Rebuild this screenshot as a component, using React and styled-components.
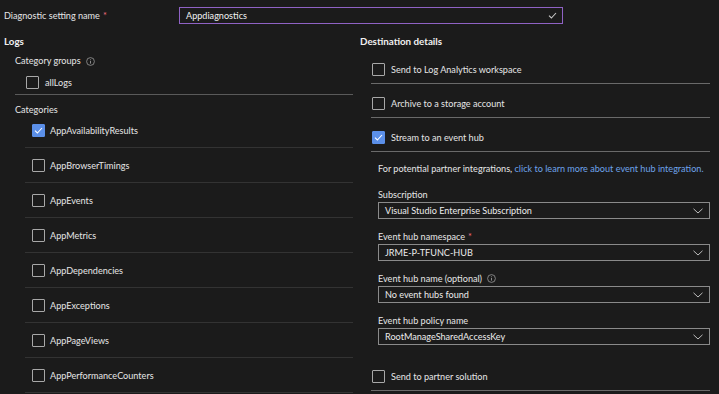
import styled, { createGlobalStyle } from 'styled-components';

const GlobalStyle = createGlobalStyle`
  html, body {
    margin: 0;
    padding: 0;
    background: #1b1b1b;
  }
  body {
    font-family: "Lato", "Open Sans", "Liberation Sans", sans-serif;
    font-size: 9.1px;
    color: #e6e6e6;
  }
`;

const Page = styled.div`
  width: 719px;
  height: 394px;
  overflow: hidden;
  background: #1b1b1b;
`;

const TopRow = styled.div`
  display: flex;
  align-items: center;
  height: 30px;
  padding-left: 4px;
`;

const TopLabel = styled.div`
  width: 175px;
`;

const Required = styled.span`
  color: #f1707b;
  margin-left: 3px;
`;

const NameInput = styled.div`
  box-sizing: border-box;
  width: 384px;
  height: 17px;
  border: 1px solid #8f62c4;
  display: flex;
  align-items: center;
  justify-content: space-between;
  padding: 0 5px 0 6px;
  color: #f2f2f2;
`;

const Columns = styled.div`
  display: grid;
  grid-template-columns: 360px 350px;
`;

const Column = styled.div`
  display: flex;
  flex-direction: column;
  padding-left: ${p => p.$pad || 0}px;
`;

const SectionTitle = styled.div`
  font-weight: 700;
  font-size: 9.8px;
  height: 22px;
  line-height: 22px;
  color: #f0f0f0;
`;

const SubTitle = styled.div`
  display: flex;
  align-items: center;
  gap: 5px;
  margin-left: 11px;
  height: 18px;
  line-height: 18px;
`;

const CategoriesTitle = styled.div`
  margin-left: 11px;
  padding-top: 10px;
  height: 8px;
  line-height: 10px;
`;

const PlainRow = styled.div`
  display: flex;
  align-items: center;
  gap: 6px;
  margin-left: 22px;
  height: 24px;
`;

const Divider = styled.div`
  margin: 0 7px 0 11px;
  height: 1px;
  background: #5a5a5a;
`;

const CatRow = styled.div`
  display: flex;
  align-items: center;
  gap: 5px;
  height: 34px;
  margin: 0 7px 0 21px;
  padding-left: 7px;
  border-bottom: 1px solid #333333;
`;

const DestRow = styled.div`
  display: flex;
  align-items: center;
  gap: 6px;
  height: 28px;
  margin: ${p => p.$top ?? 5}px 0 0 11px;
  padding-left: 1px;
  border-bottom: 1px solid #6a6a6a;
`;

const Box = styled.span`
  box-sizing: border-box;
  width: 13px;
  height: 13px;
  flex: none;
  border: 1px solid ${p => (p.$checked ? '#5b8fe8' : '#a8a8a8')};
  background: ${p => (p.$checked ? '#5b8fe8' : 'transparent')};
  border-radius: 1px;
  display: flex;
  align-items: center;
  justify-content: center;
`;

const HubSection = styled.div`
  display: flex;
  flex-direction: column;
  padding-left: 18px;
  margin-top: 9px;
`;

const Note = styled.div`
  height: 16px;
  line-height: 16px;
  white-space: nowrap;
`;

const Link = styled.span`
  color: #6ea3ea;
`;

const Field = styled.div`
  display: flex;
  flex-direction: column;
  margin-top: 9px;
`;

const FieldLabel = styled.div`
  display: flex;
  align-items: center;
  gap: 5px;
  height: 16px;
`;

const Select = styled.div`
  box-sizing: border-box;
  height: 17px;
  border: 1px solid #8a8a8a;
  display: flex;
  align-items: center;
  justify-content: space-between;
  padding: 0 6px;
  color: #ececec;
`;

const Check = ({ color = '#ffffff' }) => (
  <svg width="9" height="7" viewBox="0 0 9 7" fill="none">
    <path d="M1 3.6 L3.4 6 L8 1" stroke={color} strokeWidth="1.1" />
  </svg>
);

const Chevron = () => (
  <svg width="10" height="6" viewBox="0 0 10 6" fill="none">
    <path d="M0.5 0.8 L5 5 L9.5 0.8" stroke="#bdbdbd" strokeWidth="1" />
  </svg>
);

const Info = () => (
  <svg width="9" height="9" viewBox="0 0 9 9" fill="none">
    <circle cx="4.5" cy="4.5" r="3.9" stroke="#9a9a9a" strokeWidth="0.8" />
    <path d="M4.5 4 V6.6" stroke="#9a9a9a" strokeWidth="0.9" />
    <circle cx="4.5" cy="2.7" r="0.5" fill="#9a9a9a" />
  </svg>
);

const CheckBox = ({ checked }) => (
  <Box $checked={checked}>{checked && <Check />}</Box>
);

const categories = [
  { name: 'AppAvailabilityResults', checked: true },
  { name: 'AppBrowserTimings' },
  { name: 'AppEvents' },
  { name: 'AppMetrics' },
  { name: 'AppDependencies' },
  { name: 'AppExceptions' },
  { name: 'AppPageViews' },
  { name: 'AppPerformanceCounters' },
];

const fields = [
  { label: 'Subscription', value: 'Visual Studio Enterprise Subscription' },
  { label: 'Event hub namespace', value: 'JRME-P-TFUNC-HUB', required: true },
  { label: 'Event hub name (optional)', value: 'No event hubs found', info: true },
  { label: 'Event hub policy name', value: 'RootManageSharedAccessKey' },
];

export default function App() {
  return (
    <Page>
      <GlobalStyle />
      <TopRow>
        <TopLabel>
          Diagnostic setting name<Required>*</Required>
        </TopLabel>
        <NameInput>
          <span>Appdiagnostics</span>
          <Check color="#c8c8c8" />
        </NameInput>
      </TopRow>
      <Columns>
        <Column $pad={4}>
          <SectionTitle>Logs</SectionTitle>
          <SubTitle>
            Category groups <Info />
          </SubTitle>
          <PlainRow>
            <CheckBox />
            allLogs
          </PlainRow>
          <Divider />
          <CategoriesTitle>Categories</CategoriesTitle>
          {categories.map(c => (
            <CatRow key={c.name}>
              <CheckBox checked={c.checked} />
              {c.name}
            </CatRow>
          ))}
        </Column>
        <Column>
          <SectionTitle>Destination details</SectionTitle>
          <DestRow $top={3}>
            <CheckBox />
            Send to Log Analytics workspace
          </DestRow>
          <DestRow>
            <CheckBox />
            Archive to a storage account
          </DestRow>
          <DestRow>
            <CheckBox checked />
            Stream to an event hub
          </DestRow>
          <HubSection>
            <Note>
              For potential partner integrations,{' '}
              <Link>click to learn more about event hub integration.</Link>
            </Note>
            {fields.map(f => (
              <Field key={f.label}>
                <FieldLabel>
                  <span>
                    {f.label}
                    {f.required && <Required>*</Required>}
                  </span>
                  {f.info && <Info />}
                </FieldLabel>
                <Select>
                  <span>{f.value}</span>
                  <Chevron />
                </Select>
              </Field>
            ))}
          </HubSection>
          <DestRow $top={17}>
            <CheckBox />
            Send to partner solution
          </DestRow>
        </Column>
      </Columns>
    </Page>
  );
}
